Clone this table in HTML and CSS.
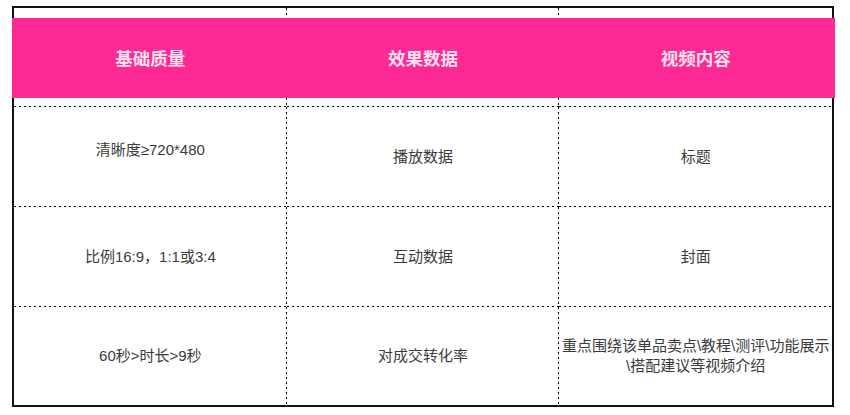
FILE: index.html
```html
<!DOCTYPE html>
<html lang="zh">
<head>
<meta charset="utf-8">
<title>视频质量标准</title>
<link rel="stylesheet" href="styles.css">
</head>
<body>
<div class="table">
  <div class="cell head-cell col-1"></div>
  <div class="cell head-cell col-2"></div>
  <div class="cell head-cell col-3 last-col"></div>
  <div class="band">
    <div class="band-item">基础质量</div>
    <div class="band-item">效果数据</div>
    <div class="band-item">视频内容</div>
  </div>

  <div class="cell raised">清晰度≥720*480</div>
  <div class="cell">播放数据</div>
  <div class="cell last-col">标题</div>

  <div class="cell">比例16:9，1:1或3:4</div>
  <div class="cell">互动数据</div>
  <div class="cell last-col">封面</div>

  <div class="cell last-row">60秒&gt;时长&gt;9秒</div>
  <div class="cell last-row">对成交转化率</div>
  <div class="cell last-row last-col">重点围绕该单品卖点\教程\测评\功能展示\搭配建议等视频介绍</div>
</div>
</body>
</html>
```

FILE: styles.css
```css
html, body {
  margin: 0;
  padding: 0;
  background: #ffffff;
}

body {
  padding: 6px 0 0 12px;
  font-family: "Liberation Sans", "Noto Sans CJK SC", sans-serif;
}

.table {
  width: 822px;
  box-sizing: border-box;
  border: 2px solid #111;
  display: grid;
  grid-template-columns: repeat(3, 1fr);
  grid-template-rows: 99px 100px 100px 98px;
}

.cell {
  display: flex;
  align-items: center;
  justify-content: center;
  text-align: center;
  padding: 0 2px;
  font-size: 15px;
  line-height: 20px;
  color: #3b3b3b;
  background-image:
    repeating-linear-gradient(to right, #000 0 2px, transparent 2px 5px),
    repeating-linear-gradient(to bottom, #000 0 2px, transparent 2px 5px);
  background-size: 100% 1px, 1px 100%;
  background-position: left bottom, right top;
  background-repeat: no-repeat;
}

.head-cell {
  grid-row: 1;
}

.col-1 { grid-column: 1; }
.col-2 { grid-column: 2; }
.col-3 { grid-column: 3; }

.last-col {
  background-image:
    repeating-linear-gradient(to right, #000 0 2px, transparent 2px 5px);
  background-size: 100% 1px;
  background-position: left bottom;
}

.last-row {
  background-image:
    repeating-linear-gradient(to bottom, #000 0 2px, transparent 2px 5px);
  background-size: 1px 100%;
  background-position: right top;
}

.last-row.last-col {
  background-image: none;
}

.raised {
  padding-bottom: 14px;
}

.band {
  grid-row: 1;
  grid-column: 1 / 4;
  margin: 10px -3px 9px -2px;
  background: #fd2a95;
  display: grid;
  grid-template-columns: 2px repeat(3, 1fr) 3px;
  z-index: 1;
}

.band-item {
  display: flex;
  align-items: center;
  justify-content: center;
  font-family: "Noto Sans CJK SC", sans-serif;
  font-size: 17.5px;
  font-weight: 700;
  color: #fce3ef;
  padding-bottom: 2px;
}

.band-item:first-child {
  grid-column: 2;
}
```
